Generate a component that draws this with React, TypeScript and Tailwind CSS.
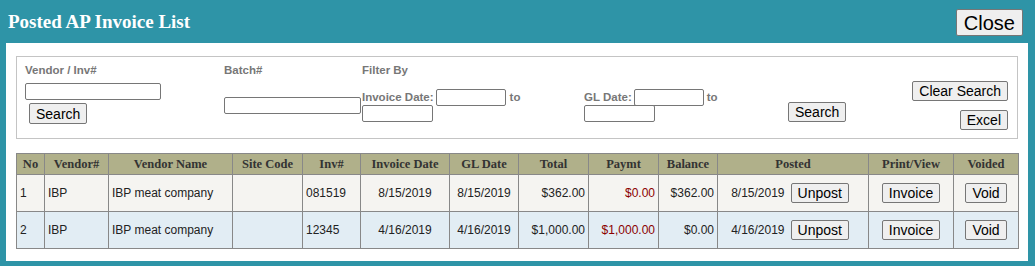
const btn =
  'bg-[#efefef] border border-[#767676] rounded-[2px] text-black font-["Liberation_Sans",Arial,sans-serif] leading-none';

const label = 'text-[11.5px] font-bold text-[#777] font-["Liberation_Sans",Arial,sans-serif] leading-[14px]';

const inputCls = 'h-[17px] border border-[#767676] rounded-[2px] bg-white';

interface Row {
  no: number;
  vendor: string;
  name: string;
  site: string;
  inv: string;
  invDate: string;
  glDate: string;
  total: string;
  paymt: string;
  balance: string;
  posted: string;
}

const rows: Row[] = [
  {
    no: 1,
    vendor: 'IBP',
    name: 'IBP meat company',
    site: '',
    inv: '081519',
    invDate: '8/15/2019',
    glDate: '8/15/2019',
    total: '$362.00',
    paymt: '$0.00',
    balance: '$362.00',
    posted: '8/15/2019',
  },
  {
    no: 2,
    vendor: 'IBP',
    name: 'IBP meat company',
    site: '',
    inv: '12345',
    invDate: '4/16/2019',
    glDate: '4/16/2019',
    total: '$1,000.00',
    paymt: '$1,000.00',
    balance: '$0.00',
    posted: '4/16/2019',
  },
];

const headers = [
  'No',
  'Vendor#',
  'Vendor Name',
  'Site Code',
  'Inv#',
  'Invoice Date',
  'GL Date',
  'Total',
  'Paymt',
  'Balance',
  'Posted',
  'Print/View',
  'Voided',
];
const widths = [28, 64, 124, 70, 58, 89, 69, 70, 70, 59, 151, 85, 65];

const td = 'border border-[#888] px-[3px] p-0';

export default function App() {
  return (
    <div className="w-[1035px] h-[266px] bg-[#2e94a7] flex flex-col font-['Liberation_Sans',Arial,sans-serif]">
      {/* title bar */}
      <div className="h-[43px] flex items-start justify-between pl-[8px] pr-[12px]">
        <h1 className="mt-[11px] text-[19px] font-bold text-white leading-[22px] font-['Liberation_Serif',serif]">
          Posted AP Invoice List
        </h1>
        <button className={`${btn} mt-[9px] h-[27px] px-[7px] text-[20px]`}>Close</button>
      </div>

      {/* panel */}
      <div className="ml-[6px] mr-[7px] h-[218px] bg-white px-[10px] pt-[13px]">
        {/* filters */}
        <div className="h-[83px] border border-[#c4c4c4] flex pl-[8px] pr-[9px] pt-[6px]">
          <div className="w-[199px] flex flex-col items-start">
            <span className={label}>Vendor / Inv#</span>
            <input className={`${inputCls} w-[136px] mt-[6px]`} />
            <button className={`${btn} ml-[4px] mt-[3px] h-[21px] px-[6px] text-[14px]`}>Search</button>
          </div>
          <div className="w-[138px] flex flex-col items-start">
            <span className={label}>Batch#</span>
            <input className={`${inputCls} w-[137px] mt-[20px]`} />
          </div>
          <div className="w-[222px] flex flex-col items-start">
            <span className={label}>Filter By</span>
            <div className="flex items-center mt-[12px] h-[16px]">
              <span className={label}>Invoice Date:</span>
              <input className={`${inputCls} h-[16px] w-[70px] ml-[2px]`} />
              <span className={`${label} ml-[4px]`}>to</span>
            </div>
            <input className={`${inputCls} w-[71px]`} />
          </div>
          <div className="w-[204px] flex flex-col items-start">
            <div className="flex items-center mt-[26px] h-[16px]">
              <span className={label}>GL Date:</span>
              <input className={`${inputCls} h-[16px] w-[70px] ml-[2px]`} />
              <span className={`${label} ml-[3px]`}>to</span>
            </div>
            <input className={`${inputCls} w-[71px]`} />
          </div>
          <div className="w-[120px] flex flex-col items-start">
            <button className={`${btn} mt-[39px] h-[20px] px-[6px] text-[14px]`}>Search</button>
          </div>
          <div className="flex-1 flex flex-col items-end">
            <button className={`${btn} mt-[18px] h-[20px] px-[6px] text-[14px]`}>Clear Search</button>
            <button className={`${btn} mt-[9px] h-[20px] px-[6px] text-[14px]`}>Excel</button>
          </div>
        </div>

        {/* table */}
        <table className="mt-[14px] w-[1002px] table-fixed border-collapse border border-[#888] text-[12px] text-[#222]">
          <colgroup>
            {widths.map((w, i) => (
              <col key={i} style={{ width: w }} />
            ))}
          </colgroup>
          <thead>
            <tr className="h-[21px] bg-[#b0b08a]">
              {headers.map((h) => (
                <th
                  key={h}
                  className="border border-[#888] p-0 text-center font-bold text-[12.5px] text-[#333] leading-[14px] font-['Liberation_Serif',serif]"
                >
                  {h}
                </th>
              ))}
            </tr>
          </thead>
          <tbody>
            {rows.map((r, i) => (
              <tr key={r.no} className={`h-[37px] ${i % 2 === 0 ? 'bg-[#f5f4f1]' : 'bg-[#e2edf4]'}`}>
                <td className={td}>{r.no}</td>
                <td className={td}>{r.vendor}</td>
                <td className={td}>{r.name}</td>
                <td className={td}>{r.site}</td>
                <td className={td}>{r.inv}</td>
                <td className={`${td} text-center`}>{r.invDate}</td>
                <td className={`${td} text-center`}>{r.glDate}</td>
                <td className={`${td} text-right`}>{r.total}</td>
                <td className={`${td} text-right text-[#8b0000]`}>{r.paymt}</td>
                <td className={`${td} text-right`}>{r.balance}</td>
                <td className={`${td} text-center`}>
                  <div className="flex items-center justify-center gap-[6px] pr-[6px]">
                    <span>{r.posted}</span>
                    <button className={`${btn} h-[20px] px-[6px] text-[14px]`}>Unpost</button>
                  </div>
                </td>
                <td className={`${td} text-center`}>
                  <button className={`${btn} h-[20px] px-[6px] text-[14px]`}>Invoice</button>
                </td>
                <td className={`${td} text-center`}>
                  <button className={`${btn} h-[20px] px-[6px] text-[14px]`}>Void</button>
                </td>
              </tr>
            ))}
          </tbody>
        </table>
      </div>
    </div>
  );
}
